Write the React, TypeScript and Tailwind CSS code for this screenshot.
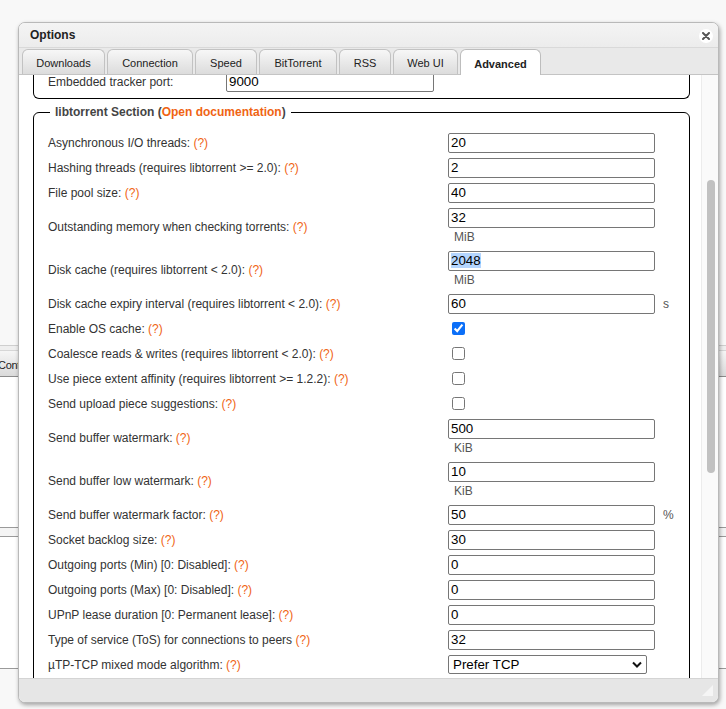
import React from "react";

type Row =
  | { kind: "input"; label: string; value: string; unit?: string; below?: string; selected?: boolean }
  | { kind: "check"; label: string; checked: boolean }
  | { kind: "select"; label: string; value: string };

const rows: Row[] = [
  { kind: "input", label: "Asynchronous I/O threads:", value: "20" },
  { kind: "input", label: "Hashing threads (requires libtorrent >= 2.0):", value: "2" },
  { kind: "input", label: "File pool size:", value: "40" },
  { kind: "input", label: "Outstanding memory when checking torrents:", value: "32", below: "MiB" },
  { kind: "input", label: "Disk cache (requires libtorrent < 2.0):", value: "2048", below: "MiB", selected: true },
  { kind: "input", label: "Disk cache expiry interval (requires libtorrent < 2.0):", value: "60", unit: "s" },
  { kind: "check", label: "Enable OS cache:", checked: true },
  { kind: "check", label: "Coalesce reads & writes (requires libtorrent < 2.0):", checked: false },
  { kind: "check", label: "Use piece extent affinity (requires libtorrent >= 1.2.2):", checked: false },
  { kind: "check", label: "Send upload piece suggestions:", checked: false },
  { kind: "input", label: "Send buffer watermark:", value: "500", below: "KiB" },
  { kind: "input", label: "Send buffer low watermark:", value: "10", below: "KiB" },
  { kind: "input", label: "Send buffer watermark factor:", value: "50", unit: "%" },
  { kind: "input", label: "Socket backlog size:", value: "30" },
  { kind: "input", label: "Outgoing ports (Min) [0: Disabled]:", value: "0" },
  { kind: "input", label: "Outgoing ports (Max) [0: Disabled]:", value: "0" },
  { kind: "input", label: "UPnP lease duration [0: Permanent lease]:", value: "0" },
  { kind: "input", label: "Type of service (ToS) for connections to peers", value: "32" },
  { kind: "select", label: "µTP-TCP mixed mode algorithm:", value: "Prefer TCP" },
];

const tabs = [
  { name: "Downloads", w: "w-[83px]" },
  { name: "Connection", w: "w-[86px]" },
  { name: "Speed", w: "w-[62px]" },
  { name: "BitTorrent", w: "w-[78px]" },
  { name: "RSS", w: "w-[52px]" },
  { name: "Web UI", w: "w-[65px]" },
  { name: "Advanced", w: "w-[81px]", active: true },
];

const Help = () => <span className="text-[#f06414]">(?)</span>;

const boxClass =
  "h-[20px] w-[207px] rounded-[2px] border border-[#767676] bg-white px-[2px] text-[13.33px] text-black outline-none";

const OptionRow = ({ row }: { row: Row }) => {
  const below = row.kind === "input" ? row.below : undefined;

  let control: React.ReactNode;
  if (row.kind === "check") {
    control = (
      <input
        type="checkbox"
        defaultChecked={row.checked}
        className="m-0 ml-[4px] h-[13px] w-[13px] accent-[#0b6ff8]"
      />
    );
  } else if (row.kind === "select") {
    control = (
      <div className="flex h-[19px] w-[199px] items-center justify-between rounded-[2px] border border-[#767676] bg-white pl-[4px] pr-[4px] text-[13.33px] text-black">
        <span>{row.value}</span>
        <svg width="10" height="7" viewBox="0 0 10 7">
          <path d="M1 1.5 L5 5.5 L9 1.5" fill="none" stroke="#111" strokeWidth="2" />
        </svg>
      </div>
    );
  } else if (row.selected) {
    control = (
      <div className={`${boxClass} flex items-center`}>
        <span className="bg-[#b4d5fe] leading-[15px]">{row.value}</span>
      </div>
    );
  } else {
    control = <input readOnly defaultValue={row.value} className={boxClass} />;
  }

  return (
    <div className={below ? "flex h-[43px]" : "flex h-[25px]"}>
      <div className="flex w-[400px] items-center text-[12px] text-[#333]">
        <span>
          {row.label} <Help />
        </span>
      </div>
      <div className="flex flex-col">
        <div className="flex h-[25px] items-center">
          {control}
          {row.kind === "input" && row.unit && (
            <span className="ml-[8px] text-[12px] text-[#555]">{row.unit}</span>
          )}
        </div>
        {below && <div className="pl-[6px] text-[12px] leading-[15px] text-[#555]">{below}</div>}
      </div>
    </div>
  );
};

export default function App() {
  return (
    <div className="relative h-[709px] w-[726px] overflow-hidden bg-[#f8f8f8] font-['Liberation_Sans',Arial,sans-serif]">
      {/* page behind the dialog */}
      <div className="h-[345px]" />
      <div className="h-[5px] border-t border-[#cfcfcf] bg-[#efefef]" />
      <div className="flex h-[27px] items-center border-y border-t-[#d6d6d6] border-b-[#8c8c8c] bg-gradient-to-b from-[#f6f6f6] to-[#dadada] pt-[4px]">
        <span className="-ml-[2px] text-[11px] tracking-[-0.3px] text-[#222]">Content</span>
      </div>
      <div className="h-[150px] bg-white" />
      <div className="h-[10px] border-y border-[#9a9a9a] bg-[#f4f4f4]" />
      <div className="h-[131px] bg-white" />
      <div className="h-[41px] border-t border-[#9a9a9a] bg-[#f8f8f8]" />

      {/* Options dialog */}
      <div className="absolute left-[18px] top-[22px] flex h-[681px] w-[701px] flex-col overflow-hidden rounded-[7px] border border-[#b9b9b9] bg-white shadow-[1px_2px_4px_rgba(0,0,0,0.35)]">
        <div className="flex h-[24px] items-center justify-between bg-gradient-to-b from-[#f4f4f4] to-[#ececec] pl-[11px] pr-[5px]">
          <span className="text-[12px] font-bold text-[#222]">Options</span>
          <span className="mt-[1px] flex h-[14px] w-[14px] items-center justify-center rounded-full bg-white">
            <svg width="8" height="8" viewBox="0 0 8 8">
              <path d="M1 1 L7 7 M7 1 L1 7" stroke="#555" strokeWidth="2" strokeLinecap="round" />
            </svg>
          </span>
        </div>

        <div className="flex h-[28px] items-end gap-[2px] border-y border-t-[#d9d9d9] border-b-[#c4c4c4] bg-[#e9e9e9] pl-[3px]">
          {tabs.map((t) =>
            t.active ? (
              <div
                key={t.name}
                className={`${t.w} -mb-[1px] flex h-[26px] items-center justify-center rounded-t-[6px] border border-b-0 border-[#bdbdbd] bg-white pt-[3px] text-[11px] font-bold text-[#222]`}
              >
                {t.name}
              </div>
            ) : (
              <div
                key={t.name}
                className={`${t.w} flex h-[25px] items-center justify-center rounded-t-[6px] border border-b-0 border-[#c2c2c2] bg-gradient-to-b from-[#f7f7f7] to-[#dcdcdc] pt-[3px] text-[11px] text-[#222]`}
              >
                {t.name}
              </div>
            )
          )}
        </div>

        <div className="flex h-[603px]">
          <div className="flex-1 overflow-hidden">
            <div className="ml-[14px] mr-[11px] h-[24px] overflow-hidden rounded-b-[6px] border-x border-b border-black pl-[14px]">
              <div className="-mt-[6px] flex h-[25px] items-center">
                <div className="w-[178px] text-[12px] text-[#333]">Embedded tracker port:</div>
                <input readOnly defaultValue="9000" className={boxClass.replace("w-[207px]", "w-[208px]")} />
              </div>
            </div>

            <fieldset className="ml-[14px] mr-[11px] mt-[5px] rounded-[6px] border border-black px-[14px] pt-[10px] pb-[10px]">
              <legend className="ml-[2px] px-[5px] text-[12px] font-bold leading-[16px] text-[#444]">
                libtorrent Section (<a className="text-[#f06414]">Open documentation</a>)
              </legend>
              {rows.map((r) => (
                <OptionRow key={r.label} row={r} />
              ))}
            </fieldset>
          </div>

          <div className="w-[17px] border-l border-[#ececec] bg-[#fafafa]">
            <div className="ml-[5px] mt-[105px] h-[293px] w-[8px] rounded-full bg-[#c1c1c1]" />
          </div>
        </div>

        <div className="flex h-[24px] items-end justify-end border-t border-[#d4d4d4] bg-[#e6e6e6] pb-[6px] pr-[5px]">
          <svg width="11" height="11" viewBox="0 0 11 11">
            <path d="M11 0 L11 11 L0 11 Z" fill="#f5f5f5" />
          </svg>
        </div>
      </div>
    </div>
  );
}
